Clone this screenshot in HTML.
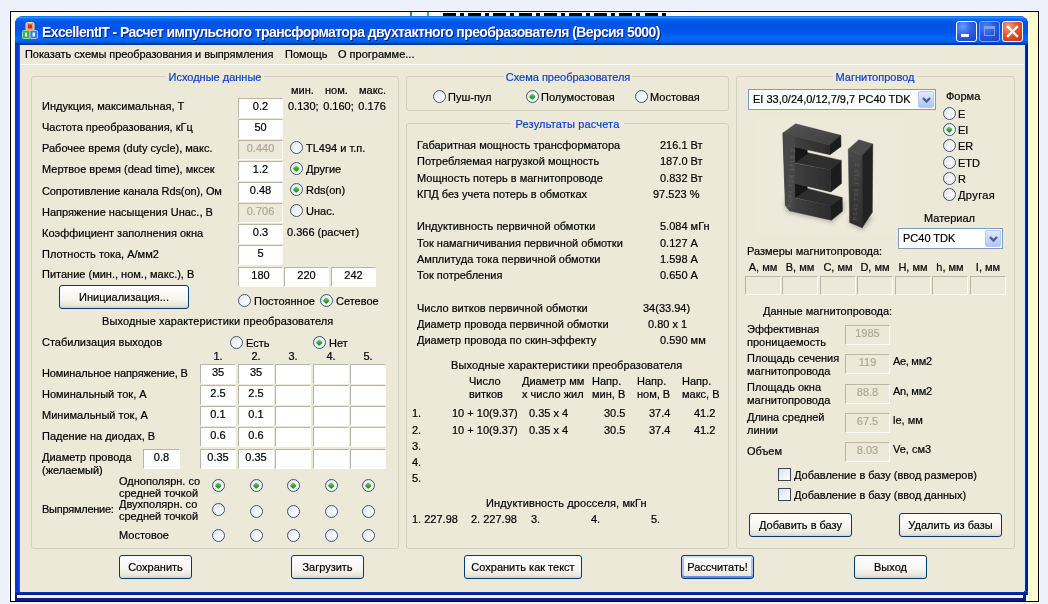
<!DOCTYPE html>
<html lang="ru">
<head>
<meta charset="utf-8">
<title>ExcellentIT</title>
<style>
html,body{margin:0;padding:0}
body{width:1048px;height:604px;overflow:hidden;position:relative;background:#eef0f9;font-family:"Liberation Sans",sans-serif;font-size:11px;color:#000;-webkit-text-stroke:0.2px}
#bg{position:absolute;left:10px;top:11px;width:1029px;height:591px;border:1px solid #000;background:linear-gradient(to right,#fffff0 0,#fffff0 1016px,#fffff2 1017px,#fafac2 1019px,#ffffd2 1022px,#fbfbc4 1025px,#fffff0 1027px);box-sizing:border-box;box-shadow:0 0 0 1px #fbfbff}
#bgw{position:absolute;left:412px;top:12px;width:280px;height:6px;background:#fff}
#win{position:absolute;left:15px;top:16px;width:1013px;height:579px;background:linear-gradient(to right,#0831d9 0,#0831d9 3px,#166aee 5px,#166aee 6px,#0855dd 50%,#0840d0 1008px,#d4e8ff 1009px,#d4e8ff 1010px,#1434a8 1010px,#000e84 1013px);border-radius:8px 8px 0 0}
#title{position:absolute;left:0;top:0;width:1013px;height:29px;border-radius:8px 8px 0 0;background:linear-gradient(to bottom,#0058ee 0%,#3593ff 4%,#288eff 6%,#127dff 8%,#036ffc 10%,#0262ee 14%,#0057e5 20%,#0054e3 24%,#0055eb 56%,#005bf5 66%,#026afe 76%,#0062ef 86%,#0052d6 92%,#0040ab 94%,#003092 100%)}
#ttext{position:absolute;left:27px;top:8px;color:#fff;font-weight:bold;font-size:14px;line-height:16px;white-space:nowrap;text-shadow:1px 1px 0 #0a1883;letter-spacing:-0.6px;-webkit-text-stroke:0}
#client{position:absolute;left:5px;top:29px;width:1004px;height:547px;background:#ece9d8}
#menu{position:absolute;left:0;top:0;width:1004px;height:19px;background:#ece9d8;border-bottom:1px solid #fff}
.t{position:absolute;white-space:nowrap;line-height:13px;font-size:11px}
.lg{color:#0b42cc;background:#ece9d8;text-align:center}
.gb{position:absolute;box-sizing:border-box;border:1px solid #d0d0bf;border-radius:3px}
.in{position:absolute;box-sizing:border-box;background:#fff;border:1px solid #fff;border-top-color:#b9b6a7;border-left-color:#b9b6a7;text-align:center;font-size:11px;white-space:nowrap;line-height:14px}
.in.dis{background:#ece9d8;color:#aca899}
.rd{position:absolute;width:13px;height:13px;box-sizing:border-box;border:1px solid #3b5878;border-radius:50%;background:linear-gradient(135deg,#dfe0e6 0%,#f2f3f8 45%,#ffffff 100%)}
.rd.on::after{content:"";position:absolute;left:3.25px;top:3.25px;width:4.5px;height:4.5px;border-radius:1.2px;transform:rotate(45deg);background:linear-gradient(135deg,#7ee07a,#25a425 60%,#1b8a1b)}
.cb{position:absolute;width:13px;height:13px;box-sizing:border-box;border:1px solid #33475f;background:linear-gradient(135deg,#d6dff2 0%,#eef1f8 50%,#ffffff 100%)}
.btn{position:absolute;box-sizing:border-box;border:1px solid #003c74;border-radius:3px;text-align:center;font-size:11px;white-space:nowrap;background:linear-gradient(to bottom,#fff 0%,#f6f5f0 60%,#e9e6da 88%,#d6d0c5 100%)}
.btn.def{box-shadow:inset 0 2px 0 #cde2fd,inset 0 -2px 0 #6b8be6,inset 2px 0 0 #a8c2f4,inset -2px 0 0 #a8c2f4}
.combo{position:absolute;box-sizing:border-box;border:1px solid #7f9db9;background:#fff;font-size:11px;white-space:nowrap}
.combo span{position:absolute;left:4px;top:-1px}
.cbtn{position:absolute;right:1px;top:1px;bottom:1px;width:16px;border-radius:2px;background:linear-gradient(to bottom,#e1eafe,#c3d3fd 60%,#b0c4f8);border:1px solid #b7c9f5;box-sizing:border-box}
.cbtn svg{position:absolute;left:3px;top:5px}
#under1{position:absolute;left:17px;top:595px;width:1006px;height:3px;background:#eef6ff}
#under2{position:absolute;left:15px;top:598px;width:1011px;height:3px;background:#0a1c8c}
#under0{position:absolute;left:15px;top:595px;width:1011px;height:3px;background:#0a1c8c}
#wbot{position:absolute;left:0;bottom:0;width:1013px;height:4px;background:linear-gradient(to bottom,#0a50e0 0,#0a2cb0 1.5px,#001a90 4px)}
#frag i{position:absolute;top:13px;height:3px;background:#000;display:block}
.cap{position:absolute;top:5px;width:21px;height:21px;box-sizing:border-box;border:1px solid #fff;border-radius:3px}
</style>
</head>
<body>
<div id="all" style="position:absolute;left:0;top:0;width:1048px;height:604px;will-change:transform">
<div id="bg"></div>
<div id="bgw"></div>
<div id="frag"><i style="left:443px;width:13px"></i><i style="left:460px;width:4px;top:13px;height:3px"></i><i style="left:468.2px;width:13px"></i><i style="left:485.2px;width:4px;top:13px;height:3px"></i><i style="left:493.4px;width:13px"></i><i style="left:510.4px;width:4px;top:13px;height:3px"></i><i style="left:518.6px;width:13px"></i><i style="left:535.6px;width:4px;top:13px;height:3px"></i><i style="left:543.8px;width:13px"></i><i style="left:560.8px;width:4px;top:13px;height:3px"></i><i style="left:569.0px;width:13px"></i><i style="left:586.0px;width:4px;top:13px;height:3px"></i><i style="left:594.2px;width:13px"></i><i style="left:611.2px;width:4px;top:13px;height:3px"></i><i style="left:619.4px;width:13px"></i><i style="left:636.4px;width:4px;top:13px;height:3px"></i><i style="left:644.6px;width:13px"></i><i style="left:661.6px;width:4px;top:13px;height:3px"></i><i style="left:410px;top:12px;width:2px;height:4px;background:#2e9a4a"></i><i style="left:427px;top:12px;width:2px;height:4px;background:#4ab858"></i></div>
<div id="under0"></div><div id="under1"></div><div id="under2"></div>
<div id="win">
 <div id="title">
  <div id="ttext">ExcellentIT - Расчет импульсного трансформатора двухтактного преобразователя (Версия 5000)</div>
  <svg id="ico" width="16" height="17" viewBox="0 0 16 17" style="position:absolute;left:7px;top:6px">
   <rect x="4" y="0.5" width="8" height="8" rx="1.5" fill="#f0a050" stroke="#f6d9b0" stroke-width="1"/>
   <rect x="6" y="2.5" width="4" height="4" fill="#e02818"/>
   <rect x="0.5" y="8.5" width="7.5" height="8" rx="1" fill="#3fae4c" stroke="#9fd8a4" stroke-width="1"/>
   <rect x="8" y="8.5" width="7.5" height="8" rx="1" fill="#3f78d8" stroke="#a9c6f2" stroke-width="1"/>
   <rect x="3" y="10.5" width="2" height="4" fill="#e8ffe8"/>
   <rect x="10.5" y="10.5" width="2.5" height="4" fill="#e8f0ff"/>
  </svg>
  <div class="cap" style="left:941px;background:radial-gradient(circle at 30% 25%,#6a9bf7 0%,#2d62e3 45%,#1c3fc2 100%)"><div style="position:absolute;left:4px;top:12px;width:8px;height:3px;background:#fff"></div></div>
  <div class="cap" style="left:964px;border-color:#7fa4ee;background:radial-gradient(circle at 30% 25%,#4d83ee 0%,#2457dc 50%,#1c44c4 100%)"><div style="position:absolute;left:4px;top:4px;width:11px;height:10px;box-sizing:border-box;border:1px solid #7d9fee;border-top-width:3px"></div></div>
  <div class="cap" style="left:987px;background:radial-gradient(circle at 30% 25%,#f0a080 0%,#e0532b 45%,#c13310 100%)"><svg width="19" height="19" viewBox="0 0 19 19" style="position:absolute;left:0;top:0"><path d="M5 5 L14 14 M14 5 L5 14" stroke="#fff" stroke-width="2.4" stroke-linecap="square"/></svg></div>
 </div>
 <div id="wbot"></div>
 <div id="client"><div id="menu"></div></div>
</div>
<div class="t" style="left:25px;top:48px;letter-spacing:-0.07px">Показать схемы преобразования и выпрямления</div>
<div class="t" style="left:285px;top:48px">Помощь</div>
<div class="t" style="left:338px;top:48px">О программе...</div>
<div style="position:absolute;left:755px;top:118px;width:150px;height:117px;background:#edeadc"></div>
<svg style="position:absolute;left:740px;top:108px" width="200" height="140" viewBox="0 0 863 604">
 <defs>
  <filter id="soft" x="-5%" y="-5%" width="110%" height="110%"><feGaussianBlur stdDeviation="2.2"/></filter>
  <filter id="shadow" x="-20%" y="-20%" width="140%" height="140%"><feGaussianBlur stdDeviation="9"/></filter>
  <linearGradient id="gTop" x1="0" y1="0" x2="1" y2="1"><stop offset="0" stop-color="#545454"/><stop offset="1" stop-color="#3e3e3e"/></linearGradient>
  <linearGradient id="gFront" x1="0" y1="0" x2="1" y2="0"><stop offset="0" stop-color="#464646"/><stop offset="1" stop-color="#2c2c2c"/></linearGradient>
  <linearGradient id="gI" x1="0" y1="0" x2="0" y2="1"><stop offset="0" stop-color="#484848"/><stop offset="1" stop-color="#2e2e2e"/></linearGradient>
 </defs>
 <g filter="url(#shadow)" opacity="0.35">
  <polygon points="190,400 200,450 400,495 450,440 450,400" fill="#555"/>
  <polygon points="468,470 476,505 530,528 578,470" fill="#555"/>
 </g>
 <g filter="url(#soft)" stroke-width="2" stroke-linejoin="round">
  <!-- E: top surfaces -->
  <polygon points="185,108 240,68 435,118 385,160" fill="url(#gTop)" stroke="url(#gTop)"/>
  <polygon points="235,236 290,192 437,226 390,266" fill="#2f2f2f" stroke="#2f2f2f"/>
  <polygon points="235,386 287,346 441,386 390,422" fill="#2d2d2d" stroke="#2d2d2d"/>
  <!-- inner gaps (dark) -->
  <polygon points="233,165 290,180 290,196 233,240" fill="#121212" stroke="#121212"/>
  <polygon points="233,322 290,338 290,350 233,390" fill="#121212" stroke="#121212"/>
  <!-- E front face -->
  <polygon points="185,108 385,160 388,202 236,168 236,238 390,266 392,362 236,326 236,388 390,422 394,484 215,444 196,420" fill="url(#gFront)" stroke="url(#gFront)"/>
  <!-- spine lighter band with print -->
  <polygon points="185,108 236,121 236,430 215,444 196,420" fill="#474747" stroke="#474747"/>
  <!-- end faces -->
  <polygon points="385,160 435,118 436,166 388,202" fill="#1a1a1a" stroke="#1a1a1a"/>
  <polygon points="390,266 437,226 438,326 392,362" fill="#1c1c1c" stroke="#1c1c1c"/>
  <polygon points="390,422 441,386 442,446 394,484" fill="#1a1a1a" stroke="#1a1a1a"/>
  <!-- I piece -->
  <polygon points="467,178 513,137 573,155 527,204" fill="#4c4c4c" stroke="#4c4c4c"/>
  <polygon points="467,178 527,204 527,517 473,494" fill="url(#gI)" stroke="url(#gI)"/>
  <polygon points="527,204 573,155 571,450 527,517" fill="#222" stroke="#222"/>
 </g>
 <g font-family="Liberation Sans, sans-serif" font-size="21" fill="#8c8c8c" opacity="0.5">
  <text transform="translate(222,428) rotate(-86)" textLength="250">PC40  TDK  1713 Z</text>
  <text transform="translate(506,484) rotate(-88)" textLength="245">PC40  TDK  1713 Z</text>
 </g>
</svg>

<div class="gb" style="left:31px;top:76px;width:368px;height:473px"></div>
<div class="t lg" style="left:166px;top:71px;width:98px;letter-spacing:0px">Исходные данные</div>
<div class="t " style="left:291px;top:84px;">мин.</div>
<div class="t " style="left:325px;top:84px;">ном.</div>
<div class="t " style="left:359px;top:84px;">макс.</div>
<div class="t " style="left:42px;top:100px;">Индукция, максимальная, Т</div>
<div class="in" style="left:238px;top:98px;width:45px;height:20px">0.2</div>
<div class="t " style="left:42px;top:121px;">Частота преобразования, кГц</div>
<div class="in" style="left:238px;top:119px;width:45px;height:20px">50</div>
<div class="t " style="left:42px;top:142px;">Рабочее время (duty cycle), макс.</div>
<div class="in dis" style="left:238px;top:140px;width:45px;height:20px">0.440</div>
<div class="t " style="left:42px;top:163px;">Мертвое время (dead time), мксек</div>
<div class="in" style="left:238px;top:161px;width:45px;height:20px">1.2</div>
<div class="t " style="left:42px;top:185px;letter-spacing:-0.1px">Сопротивление канала Rds(on), Ом</div>
<div class="in" style="left:238px;top:182px;width:45px;height:20px">0.48</div>
<div class="t " style="left:42px;top:206px;">Напряжение насыщения Uнас., В</div>
<div class="in dis" style="left:238px;top:203px;width:45px;height:20px">0.706</div>
<div class="t " style="left:42px;top:227px;">Коэффициент заполнения окна</div>
<div class="in" style="left:238px;top:224px;width:45px;height:20px">0.3</div>
<div class="t " style="left:42px;top:248px;">Плотность тока, А/мм2</div>
<div class="in" style="left:238px;top:245px;width:45px;height:20px">5</div>
<div class="t " style="left:42px;top:268px;">Питание (мин., ном., макс.), В</div>
<div class="in" style="left:238px;top:267px;width:45px;height:20px">180</div>
<div class="t " style="left:288px;top:100px;word-spacing:1.5px">0.130; 0.160; 0.176</div>
<div class="rd" style="left:290px;top:141px"></div>
<div class="t " style="left:306px;top:142px;">TL494 и т.п.</div>
<div class="rd on" style="left:290px;top:162px"></div>
<div class="t " style="left:306px;top:163px;">Другие</div>
<div class="rd on" style="left:290px;top:183px"></div>
<div class="t " style="left:306px;top:184px;">Rds(on)</div>
<div class="rd" style="left:290px;top:204px"></div>
<div class="t " style="left:306px;top:205px;">Uнас.</div>
<div class="t " style="left:287px;top:226px;">0.366 (расчет)</div>
<div class="in" style="left:284px;top:267px;width:45px;height:20px">220</div>
<div class="in" style="left:331px;top:267px;width:45px;height:20px">242</div>
<div class="btn" style="left:59px;top:285px;width:130px;height:24px;line-height:22px">Инициализация...</div>
<div class="rd" style="left:238px;top:294px"></div>
<div class="t " style="left:254px;top:295px;">Постоянное</div>
<div class="rd on" style="left:320px;top:294px"></div>
<div class="t " style="left:336px;top:295px;">Сетевое</div>
<div class="t " style="left:102px;top:315px;letter-spacing:0.11px">Выходные характеристики преобразователя</div>
<div class="t " style="left:42px;top:336px;">Стабилизация выходов</div>
<div class="rd" style="left:230px;top:336px"></div>
<div class="t " style="left:246px;top:337px;">Есть</div>
<div class="rd on" style="left:313px;top:336px"></div>
<div class="t " style="left:329px;top:337px;">Нет</div>
<div class="t " style="left:200px;top:350px;width:36px;text-align:center;">1.</div>
<div class="t " style="left:238px;top:350px;width:36px;text-align:center;">2.</div>
<div class="t " style="left:275px;top:350px;width:36px;text-align:center;">3.</div>
<div class="t " style="left:313px;top:350px;width:36px;text-align:center;">4.</div>
<div class="t " style="left:350px;top:350px;width:36px;text-align:center;">5.</div>
<div class="t " style="left:42px;top:367px;letter-spacing:-0.12px">Номинальное напряжение, В</div>
<div class="in" style="left:200px;top:364px;width:36px;height:20px">35</div>
<div class="in" style="left:238px;top:364px;width:36px;height:20px">35</div>
<div class="in" style="left:275px;top:364px;width:36px;height:20px"></div>
<div class="in" style="left:313px;top:364px;width:36px;height:20px"></div>
<div class="in" style="left:350px;top:364px;width:36px;height:20px"></div>
<div class="t " style="left:42px;top:388px;">Номинальный ток, А</div>
<div class="in" style="left:200px;top:385px;width:36px;height:20px">2.5</div>
<div class="in" style="left:238px;top:385px;width:36px;height:20px">2.5</div>
<div class="in" style="left:275px;top:385px;width:36px;height:20px"></div>
<div class="in" style="left:313px;top:385px;width:36px;height:20px"></div>
<div class="in" style="left:350px;top:385px;width:36px;height:20px"></div>
<div class="t " style="left:42px;top:409px;">Минимальный ток, А</div>
<div class="in" style="left:200px;top:406px;width:36px;height:20px">0.1</div>
<div class="in" style="left:238px;top:406px;width:36px;height:20px">0.1</div>
<div class="in" style="left:275px;top:406px;width:36px;height:20px"></div>
<div class="in" style="left:313px;top:406px;width:36px;height:20px"></div>
<div class="in" style="left:350px;top:406px;width:36px;height:20px"></div>
<div class="t " style="left:42px;top:430px;">Падение на диодах, В</div>
<div class="in" style="left:200px;top:427px;width:36px;height:20px">0.6</div>
<div class="in" style="left:238px;top:427px;width:36px;height:20px">0.6</div>
<div class="in" style="left:275px;top:427px;width:36px;height:20px"></div>
<div class="in" style="left:313px;top:427px;width:36px;height:20px"></div>
<div class="in" style="left:350px;top:427px;width:36px;height:20px"></div>
<div class="t " style="left:42px;top:451px;">Диаметр провода</div>
<div class="in" style="left:200px;top:449px;width:36px;height:20px">0.35</div>
<div class="in" style="left:238px;top:449px;width:36px;height:20px">0.35</div>
<div class="in" style="left:275px;top:449px;width:36px;height:20px"></div>
<div class="in" style="left:313px;top:449px;width:36px;height:20px"></div>
<div class="in" style="left:350px;top:449px;width:36px;height:20px"></div>
<div class="t " style="left:42px;top:464px;">(желаемый)</div>
<div class="in" style="left:143px;top:449px;width:37px;height:20px">0.8</div>
<div class="t " style="left:119px;top:475px;">Однополярн. со</div>
<div class="t " style="left:119px;top:487px;">средней точкой</div>
<div class="t " style="left:42px;top:503px;letter-spacing:-0.25px">Выпрямление:</div>
<div class="t " style="left:119px;top:498px;">Двухполярн. со</div>
<div class="t " style="left:119px;top:510px;">средней точкой</div>
<div class="t " style="left:119px;top:529px;">Мостовое</div>
<div class="rd on" style="left:212px;top:479px"></div>
<div class="rd" style="left:212px;top:503px"></div>
<div class="rd" style="left:212px;top:529px"></div>
<div class="rd on" style="left:250px;top:479px"></div>
<div class="rd" style="left:250px;top:505px"></div>
<div class="rd" style="left:250px;top:529px"></div>
<div class="rd on" style="left:287px;top:479px"></div>
<div class="rd" style="left:287px;top:505px"></div>
<div class="rd" style="left:287px;top:529px"></div>
<div class="rd on" style="left:325px;top:479px"></div>
<div class="rd" style="left:325px;top:505px"></div>
<div class="rd" style="left:325px;top:529px"></div>
<div class="rd on" style="left:362px;top:479px"></div>
<div class="rd" style="left:362px;top:505px"></div>
<div class="rd" style="left:362px;top:529px"></div>
<div class="gb" style="left:406px;top:76px;width:323px;height:35px"></div>
<div class="t lg" style="left:504px;top:71px;width:128px;letter-spacing:0px">Схема преобразователя</div>
<div class="rd" style="left:433px;top:90px"></div>
<div class="t " style="left:448px;top:91px;">Пуш-пул</div>
<div class="rd on" style="left:526px;top:90px"></div>
<div class="t " style="left:541px;top:91px;">Полумостовая</div>
<div class="rd" style="left:635px;top:90px"></div>
<div class="t " style="left:650px;top:91px;">Мостовая</div>
<div class="gb" style="left:406px;top:123px;width:323px;height:426px"></div>
<div class="t lg" style="left:511px;top:118px;width:113px;letter-spacing:0.15px">Результаты расчета</div>
<div class="t " style="left:417px;top:139px;">Габаритная мощность трансформатора</div>
<div class="t " style="left:660px;top:139px;">216.1 Вт</div>
<div class="t " style="left:417px;top:155px;">Потребляемая нагрузкой мощность</div>
<div class="t " style="left:660px;top:155px;">187.0 Вт</div>
<div class="t " style="left:417px;top:172px;">Мощность потерь в магнитопроводе</div>
<div class="t " style="left:660px;top:172px;">0.832 Вт</div>
<div class="t " style="left:417px;top:188px;">КПД без учета потерь в обмотках</div>
<div class="t " style="left:653px;top:188px;">97.523 %</div>
<div class="t " style="left:417px;top:220px;">Индуктивность первичной обмотки</div>
<div class="t " style="left:660px;top:220px;">5.084 мГн</div>
<div class="t " style="left:417px;top:237px;">Ток намагничивания первичной обмотки</div>
<div class="t " style="left:660px;top:237px;">0.127 А</div>
<div class="t " style="left:417px;top:253px;">Амплитуда тока первичной обмотки</div>
<div class="t " style="left:660px;top:253px;">1.598 А</div>
<div class="t " style="left:417px;top:269px;">Ток потребления</div>
<div class="t " style="left:660px;top:269px;">0.650 А</div>
<div class="t " style="left:417px;top:302px;">Число витков первичной обмотки</div>
<div class="t " style="left:643px;top:302px;">34(33.94)</div>
<div class="t " style="left:417px;top:318px;">Диаметр провода первичной обмотки</div>
<div class="t " style="left:648px;top:318px;">0.80 х 1</div>
<div class="t " style="left:417px;top:334px;">Диаметр провода по скин-эффекту</div>
<div class="t " style="left:660px;top:334px;">0.590 мм</div>
<div class="t " style="left:451px;top:359px;letter-spacing:0.11px">Выходные характеристики преобразователя</div>
<div class="t " style="left:469px;top:375px;">Число</div>
<div class="t " style="left:469px;top:388px;">витков</div>
<div class="t " style="left:522px;top:375px;">Диаметр мм</div>
<div class="t " style="left:522px;top:388px;">х число жил</div>
<div class="t " style="left:592px;top:375px;">Напр.</div>
<div class="t " style="left:592px;top:388px;">мин, В</div>
<div class="t " style="left:637px;top:375px;">Напр.</div>
<div class="t " style="left:637px;top:388px;">ном, В</div>
<div class="t " style="left:682px;top:375px;">Напр.</div>
<div class="t " style="left:682px;top:388px;">макс, В</div>
<div class="t " style="left:412px;top:407px;">1.</div>
<div class="t " style="left:452px;top:407px;">10 + 10(9.37)</div>
<div class="t " style="left:529px;top:407px;">0.35 х 4</div>
<div class="t " style="left:604px;top:407px;">30.5</div>
<div class="t " style="left:649px;top:407px;">37.4</div>
<div class="t " style="left:694px;top:407px;">41.2</div>
<div class="t " style="left:412px;top:424px;">2.</div>
<div class="t " style="left:452px;top:424px;">10 + 10(9.37)</div>
<div class="t " style="left:529px;top:424px;">0.35 х 4</div>
<div class="t " style="left:604px;top:424px;">30.5</div>
<div class="t " style="left:649px;top:424px;">37.4</div>
<div class="t " style="left:694px;top:424px;">41.2</div>
<div class="t " style="left:412px;top:440px;">3.</div>
<div class="t " style="left:412px;top:456px;">4.</div>
<div class="t " style="left:412px;top:472px;">5.</div>
<div class="t " style="left:486px;top:497px;letter-spacing:0.13px">Индуктивность дросселя, мкГн</div>
<div class="t " style="left:412px;top:513px;">1. 227.98</div>
<div class="t " style="left:471px;top:513px;">2. 227.98</div>
<div class="t " style="left:531px;top:513px;">3.</div>
<div class="t " style="left:591px;top:513px;">4.</div>
<div class="t " style="left:651px;top:513px;">5.</div>
<div class="gb" style="left:736px;top:76px;width:279px;height:473px"></div>
<div class="t lg" style="left:833px;top:71px;width:84px;letter-spacing:0px">Магнитопровод</div>
<div class="combo" style="left:748px;top:89px;width:188px;height:21px;line-height:21px"><span>EI 33,0/24,0/12,7/9,7 PC40 TDK</span><div class="cbtn"><svg width="9" height="6" viewBox="0 0 9 6"><path d="M1 1 L4.5 4.5 L8 1" fill="none" stroke="#4d6185" stroke-width="2.4"/></svg></div></div>
<div class="t " style="left:946px;top:90px;">Форма</div>
<div class="rd" style="left:943px;top:107px"></div>
<div class="t " style="left:958px;top:108px;">E</div>
<div class="rd on" style="left:943px;top:123px"></div>
<div class="t " style="left:958px;top:124px;">EI</div>
<div class="rd" style="left:943px;top:139px"></div>
<div class="t " style="left:958px;top:140px;">ER</div>
<div class="rd" style="left:943px;top:156px"></div>
<div class="t " style="left:958px;top:157px;">ETD</div>
<div class="rd" style="left:943px;top:172px"></div>
<div class="t " style="left:958px;top:173px;">R</div>
<div class="rd" style="left:943px;top:188px"></div>
<div class="t " style="left:958px;top:189px;letter-spacing:0.4px">Другая</div>
<div class="t " style="left:924px;top:212px;">Материал</div>
<div class="combo" style="left:898px;top:228px;width:105px;height:21px;line-height:21px"><span>PC40 TDK</span><div class="cbtn"><svg width="9" height="6" viewBox="0 0 9 6"><path d="M1 1 L4.5 4.5 L8 1" fill="none" stroke="#4d6185" stroke-width="2.4"/></svg></div></div>
<div class="t " style="left:747px;top:245px;">Размеры магнитопровода:</div>
<div class="t " style="left:745px;top:261px;width:36px;text-align:center;">A, мм</div>
<div class="in dis" style="left:745px;top:276px;width:36px;height:19px"></div>
<div class="t " style="left:782px;top:261px;width:36px;text-align:center;">B, мм</div>
<div class="in dis" style="left:782px;top:276px;width:36px;height:19px"></div>
<div class="t " style="left:820px;top:261px;width:36px;text-align:center;">C, мм</div>
<div class="in dis" style="left:820px;top:276px;width:36px;height:19px"></div>
<div class="t " style="left:857px;top:261px;width:36px;text-align:center;">D, мм</div>
<div class="in dis" style="left:857px;top:276px;width:36px;height:19px"></div>
<div class="t " style="left:895px;top:261px;width:36px;text-align:center;">H, мм</div>
<div class="in dis" style="left:895px;top:276px;width:36px;height:19px"></div>
<div class="t " style="left:932px;top:261px;width:36px;text-align:center;">h, мм</div>
<div class="in dis" style="left:932px;top:276px;width:36px;height:19px"></div>
<div class="t " style="left:970px;top:261px;width:36px;text-align:center;">I, мм</div>
<div class="in dis" style="left:970px;top:276px;width:36px;height:19px"></div>
<div class="t " style="left:763px;top:305px;">Данные магнитопровода:</div>
<div class="t " style="left:747px;top:323px;">Эффективная</div>
<div class="t " style="left:747px;top:336px;">проницаемость</div>
<div class="in dis" style="left:845px;top:325px;width:45px;height:20px">1985</div>
<div class="t " style="left:747px;top:352px;">Площадь сечения</div>
<div class="t " style="left:747px;top:365px;">магнитопровода</div>
<div class="in dis" style="left:845px;top:354px;width:45px;height:20px">119</div>
<div class="t " style="left:893px;top:355px;letter-spacing:-0.3px">Ae, мм2</div>
<div class="t " style="left:747px;top:381px;">Площадь окна</div>
<div class="t " style="left:747px;top:394px;">магнитопровода</div>
<div class="in dis" style="left:845px;top:384px;width:45px;height:20px">88.8</div>
<div class="t " style="left:893px;top:385px;letter-spacing:-0.3px">An, мм2</div>
<div class="t " style="left:747px;top:411px;">Длина средней</div>
<div class="t " style="left:747px;top:424px;">линии</div>
<div class="in dis" style="left:845px;top:413px;width:45px;height:20px">67.5</div>
<div class="t " style="left:893px;top:414px;">le, мм</div>
<div class="t " style="left:747px;top:445px;">Объем</div>
<div class="in dis" style="left:845px;top:442px;width:45px;height:20px">8.03</div>
<div class="t " style="left:893px;top:443px;">Ve, см3</div>
<div class="cb" style="left:778px;top:468px"></div>
<div class="t " style="left:794px;top:469px;">Добавление в базу (ввод размеров)</div>
<div class="cb" style="left:778px;top:488px"></div>
<div class="t " style="left:794px;top:489px;">Добавление в базу (ввод данных)</div>
<div class="btn" style="left:749px;top:513px;width:103px;height:24px;line-height:22px">Добавить в базу</div>
<div class="btn" style="left:899px;top:513px;width:103px;height:24px;line-height:22px">Удалить из базы</div>
<div class="btn" style="left:119px;top:555px;width:73px;height:24px;line-height:22px">Сохранить</div>
<div class="btn" style="left:291px;top:555px;width:73px;height:24px;line-height:22px">Загрузить</div>
<div class="btn" style="left:464px;top:555px;width:118px;height:24px;line-height:22px">Сохранить как текст</div>
<div class="btn def" style="left:681px;top:555px;width:73px;height:24px;line-height:22px">Рассчитать!</div>
<div class="btn" style="left:854px;top:555px;width:73px;height:24px;line-height:22px">Выход</div>
</div>
</body>
</html>
